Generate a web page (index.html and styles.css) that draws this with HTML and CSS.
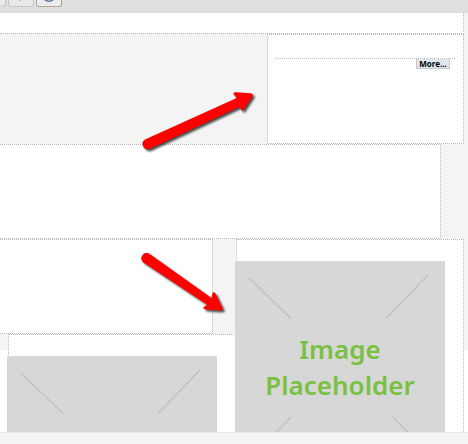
FILE: index.html
```
<!DOCTYPE html>
<html lang="en">
<head>
<meta charset="utf-8">
<title>Layout editor</title>
<link rel="stylesheet" href="styles.css">
</head>
<body>
<header class="toolbar">
  <button class="tool tool-edge" type="button"></button>
  <button class="tool" type="button"><svg width="24" height="6" viewBox="0 0 24 6"><path d="M10 0h2v1h-2z" fill="#b8bcc0"/></svg></button>
  <button class="tool tool-active" type="button"><svg width="24" height="6" viewBox="0 0 24 6"><path d="M7 -1Q12 3.500 17 -1" fill="#e8f2fb" stroke="#4f6d96" stroke-width="1.300"/></svg></button>
</header>
<main class="canvas">
  <section class="zone zone-title"></section>
  <div class="row row-aside">
    <section class="zone zone-aside">
      <div class="rule"><button class="more" type="button">More...</button></div>
    </section>
  </div>
  <section class="zone zone-band"></section>
  <div class="row">
    <div class="column-left">
      <section class="zone zone-text"></section>
      <section class="zone zone-media">
        <div class="placeholder">
          <svg class="cross" viewBox="0 0 210 210"><path d="M14 17 56 57.500M193 14 151 57.500M56 156 14 200M158 156 200 200"/></svg>
        </div>
      </section>
    </div>
    <section class="zone zone-media column-right">
      <figure class="placeholder">
        <svg class="cross" viewBox="0 0 210 210"><path d="M14 17 56 57.500M193 14 151 57.500M56 156 14 200M158 156 200 200"/></svg>
        <figcaption class="caption">Image<br>Placeholder</figcaption>
      </figure>
    </section>
  </div>
</main>
<footer class="status"></footer>
<svg class="arrows" width="468" height="444" viewBox="0 0 468 444">
  <path d="M145 139.500 236.700 98 233.500 94Q233 92 236 92.300L251 93.200Q254 94 252.300 96.500L243.500 110Q241.500 112 240.800 109L239.800 106.800 149.500 149A5.300 5.300 0 0 1 145 139.500Z"/>
  <path d="M149 253.500 211.500 298 212.300 293.500Q213.500 291 215.500 293.500L222.500 308Q223.500 310.500 220.500 310.500L205 309.500Q202 308.500 204.500 306.500L207.300 304.700 143.500 262.500A5.300 5.300 0 0 1 149 253.500Z"/>
</svg>
</body>
</html>
```

FILE: styles.css
```
* {
  box-sizing: border-box;
}

body {
  position: relative;
  display: flex;
  flex-direction: column;
  height: 100vh;
  margin: 0;
  overflow: hidden;
  font-family: "Noto Sans", "Open Sans", sans-serif;
}

button {
  margin: 0;
  padding: 0;
}

.toolbar {
  display: flex;
  flex: none;
  align-items: flex-start;
  gap: 2px;
  height: 13px;
  background: #dfdfdf;
}

.tool {
  width: 26px;
  height: 7px;
  border: 1px solid #c6c6c6;
  border-top: 0;
  border-radius: 0 0 3px 3px;
  background: #e9e9e9;
}

.tool svg {
  display: block;
}

.tool-edge {
  width: 6px;
  border-left: 0;
}

.tool-active {
  border-color: #aaa79f;
  background: #ececec;
}

.canvas {
  flex: 1;
  min-height: 0;
  padding-right: 4px;
  overflow: hidden;
  background: linear-gradient(#f4f4f4, #f4f4f4) top / 100% 337px no-repeat #fff;
}

.zone {
  border: 1px dotted #b8b8b8;
  background: #fff;
}

.row {
  display: flex;
}

.zone-title {
  height: 21px;
  border-width: 0 1px 1px 0;
}

.row-aside {
  justify-content: flex-end;
}

.zone-aside {
  width: 197px;
  height: 110px;
  padding: 23px 8px;
}

.rule {
  display: flex;
  justify-content: flex-end;
  padding-right: 5px;
  border-top: 1px dotted #b8b8b8;
}

.more {
  width: 34px;
  height: 10px;
  border: 1px solid #c5c9ce;
  border-top: 0;
  background: #e0e6ee;
  color: #000;
  font: bold 8px/9px "Open Sans", sans-serif;
}

.zone-band {
  height: 95px;
  margin-right: 23px;
  border-left: 0;
}

.column-left {
  width: 236px;
}

.column-right {
  flex: 1;
}

.zone-text {
  height: 95px;
  margin-right: 23px;
  border-left: 0;
}

.zone-media {
  height: 227px;
  padding-top: 21px;
}

.column-left .zone-media {
  margin-left: 8px;
  border-right: 0;
}

.placeholder {
  display: grid;
  width: 210px;
  height: 210px;
  margin: 0 0 0 -2px;
  background: #d7d7d7;
}

.cross,
.caption {
  grid-area: 1 / 1;
}

.cross {
  width: 210px;
  height: 210px;
  fill: none;
  stroke: #c2c2c2;
  stroke-width: 1.5;
}

.caption {
  padding-top: 70px;
  color: #7ac143;
  font-size: 26px;
  font-weight: 600;
  line-height: 36px;
  text-align: center;
}

.status {
  flex: none;
  height: 12px;
  border-top: 1px solid #e8e8e8;
  background: #f4f4f4;
}

/* Callout arrows drawn over the zones */
.arrows {
  position: absolute;
  top: 0;
  left: 0;
  fill: #fe0000;
  filter: drop-shadow(2px 2px 1px rgba(0, 0, 0, 0.7));
  pointer-events: none;
}
```
